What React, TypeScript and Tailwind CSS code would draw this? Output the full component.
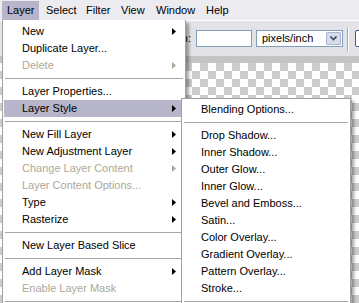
import React from "react";

type Item = { label?: string; sub?: boolean; disabled?: boolean; active?: boolean; sep?: boolean };

const layerMenu: Item[] = [
  { label: "New", sub: true },
  { label: "Duplicate Layer..." },
  { label: "Delete", sub: true, disabled: true },
  { sep: true },
  { label: "Layer Properties..." },
  { label: "Layer Style", sub: true, active: true },
  { sep: true },
  { label: "New Fill Layer", sub: true },
  { label: "New Adjustment Layer", sub: true },
  { label: "Change Layer Content", sub: true, disabled: true },
  { label: "Layer Content Options...", disabled: true },
  { label: "Type", sub: true },
  { label: "Rasterize", sub: true },
  { sep: true },
  { label: "New Layer Based Slice" },
  { sep: true },
  { label: "Add Layer Mask", sub: true },
  { label: "Enable Layer Mask", disabled: true },
  { sep: true },
];

const styleMenu: Item[] = [
  { label: "Blending Options..." },
  { sep: true },
  { label: "Drop Shadow..." },
  { label: "Inner Shadow..." },
  { label: "Outer Glow..." },
  { label: "Inner Glow..." },
  { label: "Bevel and Emboss..." },
  { label: "Satin..." },
  { label: "Color Overlay..." },
  { label: "Gradient Overlay..." },
  { label: "Pattern Overlay..." },
  { label: "Stroke..." },
  { sep: true },
];

const Arrow = ({ disabled }: { disabled?: boolean }) => (
  <svg width="4" height="7" viewBox="0 0 4 7">
    <polygon points="0,0 4,3.5 0,7" fill={disabled ? "#aca899" : "#000"} />
  </svg>
);

const MenuRows = ({ items }: { items: Item[] }) => (
  <>
    {items.map((it, i) =>
      it.sep ? (
        <div key={i} className="h-[9px] flex items-center px-[2px]">
          <div className="h-px w-full bg-[#a6a6a6]" />
        </div>
      ) : (
        <div
          key={i}
          className={
            "h-[17px] flex items-center justify-between pl-[18px] pr-[8px] mx-[1px] " +
            (it.active ? "bg-[#b6b5c9] " : "") +
            (it.disabled ? "text-[#aca899]" : "text-black")
          }
        >
          <span>{it.label}</span>
          {it.sub && <Arrow disabled={it.disabled} />}
        </div>
      )
    )}
  </>
);

export default function App() {
  return (
    <div className="relative w-[359px] h-[303px] overflow-hidden bg-[#c4c4c4] font-['Liberation_Sans',sans-serif] text-[11px] leading-none">
      {/* menubar */}
      <div className="h-[20px] bg-[#ecebef] flex items-stretch pt-[1px]">
        <div className="ml-[2px] w-[37px] pl-[5px] flex items-center bg-[#b6b5c9]">Layer</div>
        <div className="w-[41px] pl-[7px] flex items-center">Select</div>
        <div className="w-[35px] pl-[6px] flex items-center">Filter</div>
        <div className="w-[35px] pl-[6px] flex items-center">View</div>
        <div className="w-[50px] pl-[6px] flex items-center">Window</div>
        <div className="w-[40px] pl-[6px] flex items-center">Help</div>
      </div>

      {/* options bar */}
      <div className="h-[36px] bg-[#e3e2e6] border-t border-white flex items-center">
        <span className="shrink-0 w-[191px] text-right">Resolution:</span>
        <div className="shrink-0 ml-[5px] w-[56px] h-[17px] bg-white border border-[#7f9db9]" />
        <div className="shrink-0 ml-[4px] w-[87px] h-[17px] bg-white border border-[#7f9db9] flex items-center">
          <span className="flex-1 pl-[5px]">pixels/inch</span>
          <div className="w-[15px] h-[13px] mr-px bg-[#d6dcea] border border-[#aab6d2] rounded-[1px] flex items-center justify-center">
            <svg width="7" height="5" viewBox="0 0 7 5">
              <polyline points="0.5,0.5 3.5,3.5 6.5,0.5" fill="none" stroke="#3c4a66" strokeWidth="1.6" />
            </svg>
          </div>
        </div>
        <div className="shrink-0 ml-[4px] w-px h-[24px] bg-[#a9a9ad]" />
        <div className="shrink-0 w-px h-[24px] bg-white" />
        <div className="shrink-0 ml-[6px] w-[10px] h-[17px] bg-white border border-[#2f5fa0] rounded-[2px]" />
      </div>

      {/* canvas */}
      <div className="h-[7px] bg-[#c4c4c4]" />
      <div className="h-[240px] bg-[conic-gradient(#cdcdcd_25%,#ffffff_0_50%,#cdcdcd_0_75%,#ffffff_0)] bg-[length:16px_16px]" />

      {/* Layer menu */}
      <div className="absolute left-[2px] top-[20px] w-[184px] h-[300px] bg-white border border-[#a0a0a0] border-t-0 pt-[3px] shadow-[3px_3px_3px_rgba(0,0,0,0.35)]">
        <MenuRows items={layerMenu} />
      </div>

      {/* Layer Style submenu */}
      <div className="absolute left-[181px] top-[98px] w-[170px] h-[220px] bg-white border border-[#a0a0a0] pt-[2px] shadow-[3px_3px_3px_rgba(0,0,0,0.35)]">
        <MenuRows items={styleMenu} />
      </div>
    </div>
  );
}
